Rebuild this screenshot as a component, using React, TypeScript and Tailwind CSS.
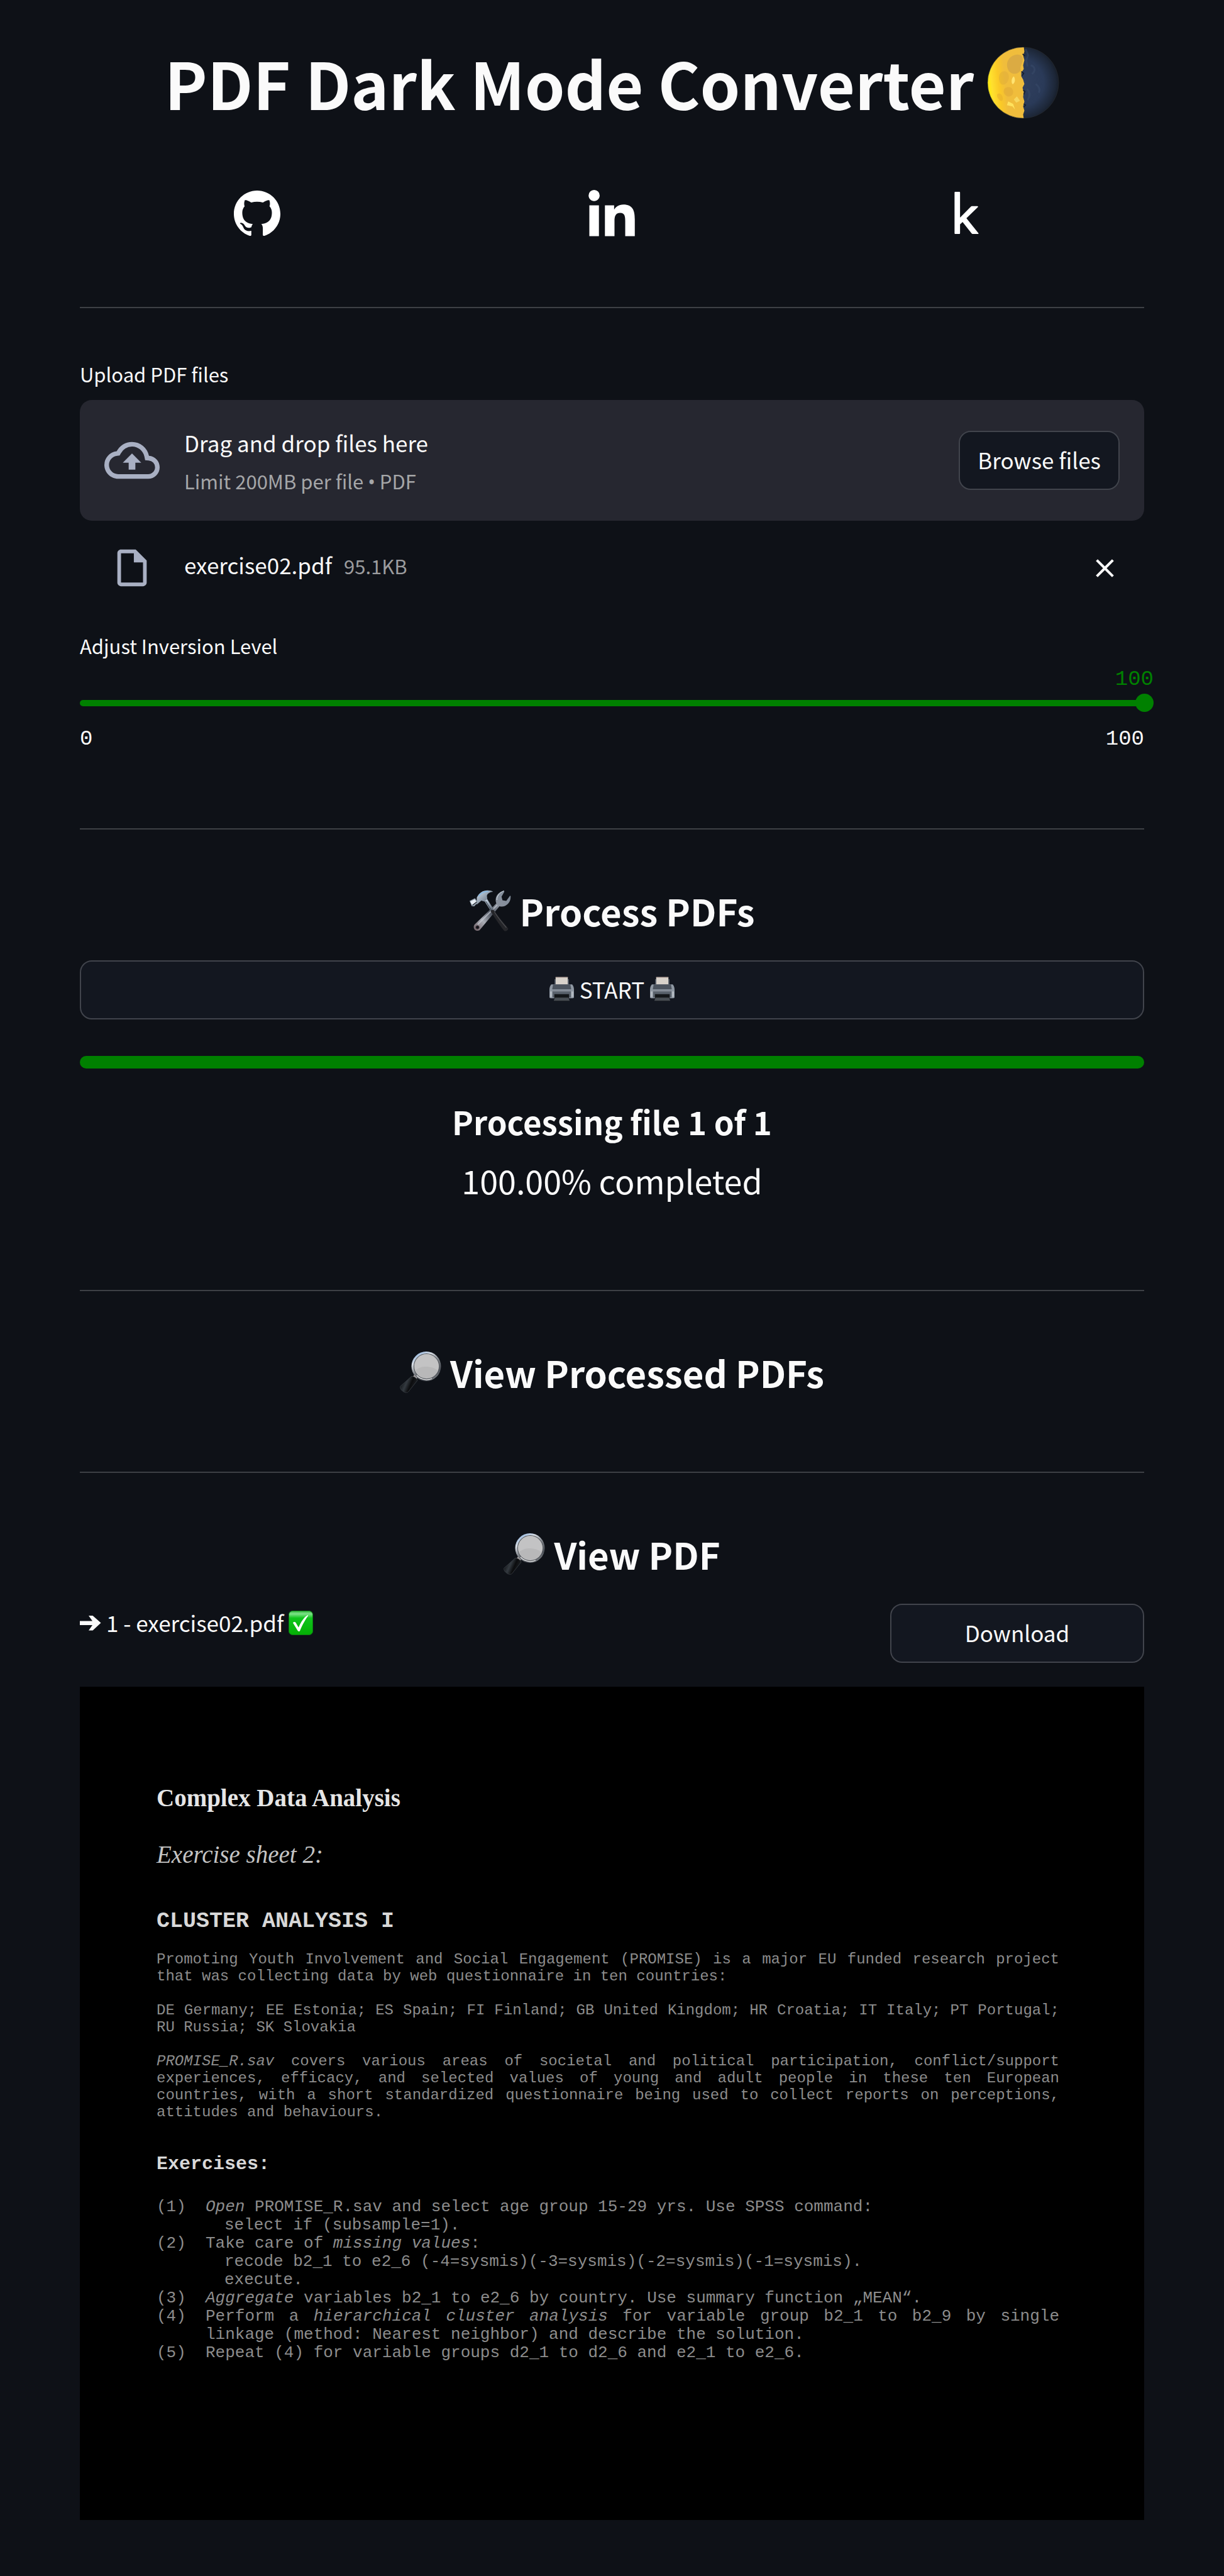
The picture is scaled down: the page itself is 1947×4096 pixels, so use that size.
import { useState } from "react";
import type { ReactNode } from "react";
import { SiGithub } from "react-icons/si";
import { FaLinkedinIn } from "react-icons/fa";
import { MdClear, MdOutlineCloudUpload, MdOutlineInsertDriveFile } from "react-icons/md";

function MoonIcon() {
  return (
    <svg viewBox="0 0 116 116" className="size-[115px] shrink-0" role="img" aria-label="First quarter moon">
      <defs>
        <linearGradient id="moonLit" x1="0" x2="1" y1="0.6" y2="0.4">
          <stop offset="0" stopColor="#fff200" />
          <stop offset="0.14" stopColor="#ffe02e" />
          <stop offset="0.32" stopColor="#fbc926" />
          <stop offset="0.5" stopColor="#f0bd3c" />
        </linearGradient>
        <radialGradient id="moonDark" cx="0.45" cy="0.5" r="0.56">
          <stop offset="0" stopColor="#31405f" />
          <stop offset="0.6" stopColor="#2a3a58" />
          <stop offset="0.88" stopColor="#1d2738" />
          <stop offset="1" stopColor="#141a24" />
        </radialGradient>
        <clipPath id="moonDisc">
          <circle cx="58" cy="58" r="57" />
        </clipPath>
      </defs>
      <g clipPath="url(#moonDisc)">
        <rect width="116" height="116" fill="url(#moonDark)" />
        <path d="M0 0H59L60 8L58 14L60 22L58 30L59 36L55 42L55 48L58 53L60 60L57 66L59 73L58 81L60 88L58 96L60 103L58 109L59 116H0Z" fill="url(#moonLit)" />
        <path d="M38 17c8-6 17-5 19 1 2 8-5 13-3 20-5 8-14 7-19 1-5-8-3-17 3-22Z" fill="#c69a49" opacity="0.5" />
        <path d="M22 42c6-5 12-2 13 5s-4 15-10 14-8-14-3-19Z" fill="#d9a83a" opacity="0.4" />
        <path d="M30 66c7-3 12 1 12 7s-6 9-11 6-6-10-1-13Z" fill="#d39c33" opacity="0.35" />
        <path d="M17 76c4-2 7 1 8 5s0 7-3 6-8-8-5-11Z" fill="#e3ac2e" opacity="0.5" />
        <path d="M43 48c3 4 2 10-1 12s-4-9 1-12Z" fill="#ffe371" />
        <path d="M34 88l8 4 3 9-4-5-9-2Z" fill="#ffe25d" />
        <path d="M48 80l5 7-6 3-4-5Z" fill="#f9dd68" opacity="0.8" />
        <path d="M62 4l4 10-3 8 2 10M70 30c8 2 8 10 2 14M64 68c6 6 5 12 1 18M78 60c5 3 8 9 5 14" fill="none" stroke="#3c4d6d" strokeWidth="3" opacity="0.45" />
        <path d="M57 12l4 3M55 40l4 3-3 4M58 70l3 2-2 5M59 92l3 2-3 3" fill="none" stroke="#151d2c" strokeWidth="1.5" />
      </g>
      <circle cx="58" cy="58" r="57" fill="none" stroke="#2b2f33" strokeWidth="0.8" opacity="0.7" />
    </svg>
  );
}

function KaggleIcon() {
  return (
    <svg viewBox="0 0 24 24" className="block size-[67px]" fill="currentColor" aria-hidden="true">
      <path d="M18.825 23.859c-.022.092-.117.141-.281.141h-3.139c-.187 0-.351-.082-.492-.248l-5.178-6.589-1.448 1.374v5.111c0 .235-.117.352-.351.352H5.505c-.236 0-.354-.117-.354-.352V.353c0-.233.118-.353.354-.353h2.431c.234 0 .351.12.351.353v14.343l6.203-6.272c.165-.165.33-.246.495-.246h3.239c.144 0 .236.06.285.18.046.149.034.255-.036.315l-6.555 6.344 6.836 8.507c.095.104.117.208.07.358" />
    </svg>
  );
}

function ToolsIcon() {
  return (
    <svg viewBox="0 0 66 66" className="size-[66px] shrink-0" role="img" aria-label="Hammer and wrench">
      <defs>
        <linearGradient id="toolSteel" x1="0" x2="1" y1="0" y2="1">
          <stop offset="0" stopColor="#d7e6f2" />
          <stop offset="0.5" stopColor="#8f9cab" />
          <stop offset="1" stopColor="#555c68" />
        </linearGradient>
        <linearGradient id="wrenchSteel" x1="1" x2="0" y1="0" y2="1">
          <stop offset="0" stopColor="#7f8c9a" />
          <stop offset="0.35" stopColor="#8a919d" />
          <stop offset="0.55" stopColor="#4e545f" />
          <stop offset="0.75" stopColor="#a9adb5" />
          <stop offset="1" stopColor="#6a5a60" />
        </linearGradient>
      </defs>
      <path d="M54.500 1.500C47 3 41 9 41.500 17c.1 2 .6 3.300 1 4.500L8.200 54.800c-3.500 3.700-1 10.200 4.300 10.200 2.200 0 3.600-1 4.700-2.500L47.500 26c8 2.500 18-3.500 17.800-15.500l-.8-1.500-6.200 8.600-6-1-1.500-5.800 4.500-8Z" fill="url(#wrenchSteel)" />
      <path d="M54.500 1.500C48 4 43.500 9 43.300 16" fill="none" stroke="#d4dbe2" strokeWidth="1" />
      <path d="M44 24L13 55" fill="none" stroke="#c4c9d1" strokeWidth="2" opacity="0.7" />
      <circle cx="12.500" cy="59.500" r="2.700" fill="#0e1117" stroke="#4c3a40" strokeWidth="1" />
      <path d="M23.500 17.500l4.200-3.200 10.500 16.500-4.200 3.400Z" fill="url(#toolSteel)" />
      <path d="M25.500 18l9.500 15" stroke="#3b414b" strokeWidth="1.200" />
      <path d="M33.200 33.500c2-1.800 4.200-2.500 5.500-1 6 9 15.500 20 22.500 28.500 1 2.600-3 5.600-6 4.300C48 56 39.500 44 33.200 33.500Z" fill="#25262a" />
      <path d="M39.500 35c5 8 12 17 19 25" fill="none" stroke="#4b4c50" strokeWidth="1.400" />
      <path d="M11.500 12C15 5 21 .5 28.500.7c4 .1 7.500.8 8.700 2.300-5 .4-8.700 2.500-9.700 6.500l.7 5-5 4-4.500-1.500-7.500 6.500Z" fill="url(#toolSteel)" />
      <path d="M14 10C18 4.500 23 2 30 2.500" fill="none" stroke="#83b8e6" strokeWidth="1.500" />
      <path d="M0 17.500l8.500-4.300 4.500 6.800-5.800 6.300-3.800-.6Z" fill="#9aa7b5" />
      <path d="M1 18.500l7-3.500 3 3.800-7 5.200Z" fill="#e7eef4" />
      <path d="M4.500 24.500l7-5.500" stroke="#2c3038" strokeWidth="1.500" />
    </svg>
  );
}

function MagnifierIcon() {
  return (
    <svg viewBox="0 0 66 66" className="size-[66px] shrink-0" role="img" aria-label="Magnifying glass">
      <defs>
        <linearGradient id="lensRim" x1="0.2" x2="0.8" y1="0" y2="1">
          <stop offset="0" stopColor="#8fb5e2" />
          <stop offset="0.25" stopColor="#d6dbe2" />
          <stop offset="0.55" stopColor="#73777d" />
          <stop offset="0.8" stopColor="#4d5259" />
          <stop offset="1" stopColor="#8c8f93" />
        </linearGradient>
        <linearGradient id="lensHandle" x1="0" x2="1" y1="0.3" y2="0.7">
          <stop offset="0" stopColor="#0a0c0f" />
          <stop offset="0.35" stopColor="#343a40" />
          <stop offset="0.6" stopColor="#0b0c0e" />
          <stop offset="1" stopColor="#26292d" />
        </linearGradient>
      </defs>
      <path d="M20.500 40.500l3.500-5 5 4.500-3.500 5Z" fill="#a9a4a4" />
      <path d="M18.500 39.500c3.500-.5 9 3 9.500 6.500L13.500 64c-1.500 1.800-4.500 1.800-7.500 0C2 61.500.2 58.500.6 55.500Z" fill="url(#lensHandle)" stroke="#3a3f45" strokeWidth="0.800" />
      <circle cx="42" cy="23.500" r="23.500" fill="url(#lensRim)" />
      <circle cx="42.500" cy="23.500" r="20.600" fill="#55595e" />
      <circle cx="42.500" cy="23.500" r="19.600" fill="#c3c3c4" />
      <path d="M25 30a18.500 18.500 0 0 0 35 0c-8-7-26-9-35 0Z" fill="#b4b4b5" opacity="0.7" />
      <path d="M27 38a21 21 0 0 0 24 5" fill="none" stroke="#e9e9ea" strokeWidth="1.200" />
    </svg>
  );
}

function PrinterIcon() {
  return (
    <svg viewBox="0 0 40 40" className="size-[39px] shrink-0" aria-hidden="true">
      <path d="M10 1h20v12H10Z" fill="#d8d2cb" />
      <path d="M10 .3h20v1.200H10Z" fill="#a08d86" />
      <path d="M8.500 4h1.500v9H8.500zM30 4h1.500v9H30z" fill="#68707b" />
      <path d="M3 12.500h34c2 2 3 5 3 9V33c0 1.500-1 2-2 2H2c-1 0-2-.5-2-2V21.500c0-4 1-7 3-9Z" fill="#8f98a3" />
      <path d="M6 12.500h28l1.500 8H4.500Z" fill="#4c545f" />
      <path d="M5 21h30v2.500H5Z" fill="#838b96" />
      <path d="M5 24h30v10H5Z" fill="#59616b" />
      <path d="M1 24h3v9H1zM36 24h3v9h-3z" fill="#b3bac2" />
      <path d="M8 28.500h24V39c0 .6-.4 1-1 1H9c-.6 0-1-.4-1-1Z" fill="#14171a" />
      <path d="M9 34h22l2 5.300H7Z" fill="#484e54" />
    </svg>
  );
}

function CheckIcon() {
  return (
    <svg viewBox="0 0 40 40" className="size-[39px] shrink-0" role="img" aria-label="Done">
      <defs>
        <linearGradient id="checkFill" x1="0" x2="0" y1="0" y2="1">
          <stop offset="0" stopColor="#2fb53a" />
          <stop offset="0.12" stopColor="#7fe28a" />
          <stop offset="0.3" stopColor="#0fc41c" />
          <stop offset="1" stopColor="#04b004" />
        </linearGradient>
      </defs>
      <rect x="0.500" y="0.500" width="39" height="39" rx="6" fill="url(#checkFill)" stroke="#0c7a14" strokeWidth="1" />
      <path d="M8 19c2-1 3-.5 4 1l4.300 7.500C20 19 25 11 31 7.500c.8-.3 1.200.2.8 1C27 15 22 24.500 18.500 33c-.6 1.200-2.600 1.300-3.300.2L7.500 20.500c-.4-.8-.2-1.300.5-1.500Z" fill="#fff" />
    </svg>
  );
}

function ArrowIcon() {
  return (
    <svg viewBox="0 0 34 25" className="h-[25px] w-[34px] shrink-0" aria-hidden="true">
      <path d="M0 9.500H20L14 1h6.500L33.500 12.500 20.500 24.500H14l6-8.500H0Z" fill="#fafafa" />
    </svg>
  );
}

function SectionTitle({ icon, children }: { icon: ReactNode; children: ReactNode }) {
  return (
    <h3 className="mt-[87px] flex items-center justify-center gap-[14px] text-[58px] leading-[84px] font-bold">
      {icon}
      <span>{children}</span>
    </h3>
  );
}

function Divider({ className }: { className: string }) {
  return <hr className={`h-[2px] border-0 bg-[#3d4045] ${className}`} />;
}

const buttonLook = "h-[94px] rounded-[19px] border-2 border-[#41444c] bg-[#131720] pb-[3px] text-[35px] leading-[56px]";

function Exercise({ n, children }: { n: number; children: ReactNode }) {
  return (
    <li className="flex">
      <span className="w-[78px] shrink-0">({n})</span>
      <div className="min-w-0 flex-1">{children}</div>
    </li>
  );
}

function PdfPage() {
  return (
    <article className="mt-[36px] bg-black pt-[154px] pr-[135px] pb-[251px] pl-[122px] font-['Liberation_Mono',monospace] text-[#8c8c8c]">
      <h4 className="font-['Liberation_Serif',serif] text-[39px] leading-[45px] font-bold text-[#e6e6e6]">Complex Data Analysis</h4>
      <p className="mt-[45px] font-['Liberation_Serif',serif] text-[39px] leading-[45px] text-[#c4c4c4] italic">Exercise sheet 2:</p>
      <h5 className="mt-[64px] text-[35px] leading-[40px] font-bold text-[#d8d8d8]">CLUSTER ANALYSIS I</h5>
      <div className="mt-[27px] flex flex-col gap-[27px] text-justify text-[24px] leading-[27px]">
        <p>
          Promoting Youth Involvement and Social Engagement (PROMISE) is a major EU funded research project that was
          collecting data by web questionnaire in ten countries:
        </p>
        <p>
          DE Germany; EE Estonia; ES Spain; FI Finland; GB United Kingdom; HR Croatia; IT Italy; PT Portugal; RU Russia;
          SK Slovakia
        </p>
        <p>
          <i>PROMISE_R.sav</i> covers various areas of societal and political participation, conflict/support
          experiences, efficacy, and selected values of young and adult people in these ten European countries, with a
          short standardized questionnaire being used to collect reports on perceptions, attitudes and behaviours.
        </p>
      </div>
      <h5 className="mt-[51px] text-[30px] leading-[36px] font-bold text-[#d8d8d8]">Exercises:</h5>
      <ol className="mt-[36px] text-[26px] leading-[29px]">
        <Exercise n={1}>
          <p><i>Open</i> PROMISE_R.sav and select age group 15-29 yrs. Use SPSS command:</p>
          <p className="pl-[30px]">select if (subsample=1).</p>
        </Exercise>
        <Exercise n={2}>
          <p>Take care of <i>missing values</i>:</p>
          <p className="pl-[30px]">recode b2_1 to e2_6 (-4=sysmis)(-3=sysmis)(-2=sysmis)(-1=sysmis).</p>
          <p className="pl-[30px]">execute.</p>
        </Exercise>
        <Exercise n={3}>
          <p><i>Aggregate</i> variables b2_1 to e2_6 by country. Use summary function „MEAN“.</p>
        </Exercise>
        <Exercise n={4}>
          <p className="text-justify">
            Perform a <i>hierarchical cluster analysis</i> for variable group b2_1 to b2_9 by single linkage (method:
            Nearest neighbor) and describe the solution.
          </p>
        </Exercise>
        <Exercise n={5}>
          <p>Repeat (4) for variable groups d2_1 to d2_6 and e2_1 to e2_6.</p>
        </Exercise>
      </ol>
    </article>
  );
}

export default function App() {
  const [level, setLevel] = useState(100);

  return (
    <main className="min-h-screen bg-[#0e1117] px-[127px] pt-[59px] pb-[89px] font-['Noto_Sans_CJK_SC',sans-serif] text-[#fafafa]">
      <h1 className="flex items-center justify-center gap-[21px] text-[102px] leading-[144px] font-bold">
        <span>PDF Dark Mode Converter</span>
        <MoonIcon />
      </h1>

      <nav className="mt-[99px] grid h-[73px] grid-cols-3 items-start justify-items-center text-white">
        <a href="#github" aria-label="GitHub" className="block"><SiGithub className="block size-[74px]" /></a>
        <a href="#linkedin" aria-label="LinkedIn" className="block"><FaLinkedinIn className="block size-[84px]" /></a>
        <a href="#kaggle" aria-label="Kaggle" className="block pt-[3px]"><KaggleIcon /></a>
      </nav>

      <Divider className="mt-[113px]" />

      <label htmlFor="browse" className="mt-[87px] block text-[31px] leading-[36px]">Upload PDF files</label>
      <section className="mt-[23px] flex h-[192px] items-center gap-[39px] rounded-[19px] bg-[#262730] px-[39px]">
        <MdOutlineCloudUpload className="size-[88px] shrink-0 text-[#a9b0c3]" />
        <div className="flex flex-1 flex-col gap-[9px]">
          <span className="text-[35px] leading-[56px]">Drag and drop files here</span>
          <span className="text-[31px] leading-[48px] text-[#a5a6a8]">
            Limit 200MB per file <span className="font-['Noto_Sans',sans-serif] leading-none">•</span> PDF
          </span>
        </div>
        <button id="browse" type="button" className={`px-[28px] ${buttonLook}`}>Browse files</button>
      </section>
      <div className="mt-[27px] flex h-[96px] items-center pr-[38px] pl-[48px]">
        <MdOutlineInsertDriveFile className="size-[70px] shrink-0 text-[#a9b0c3]" />
        <div className="mb-2 ml-[48px] flex flex-1 items-baseline gap-[19px]">
          <span className="text-[35px] leading-[56px]">exercise02.pdf</span>
          <small className="text-[31px] leading-[56px] text-[#9b9c9e]">95.1KB</small>
        </div>
        <button type="button" aria-label="Remove file"><MdClear className="size-[49px]" /></button>
      </div>

      <label htmlFor="level" className="mt-[58px] block text-[31px] leading-[36px]">Adjust Inversion Level</label>
      <output htmlFor="level" className="mt-[17px] -mr-[15px] block text-right font-['Liberation_Mono',monospace] text-[34px] leading-[36px] text-[#008000]">{level}</output>
      <div className="mt-[5px] grid h-[29px] items-center">
        <div className="col-start-1 row-start-1 h-[10px] overflow-hidden rounded-[5px] bg-[#3d4045]">
          <div className="h-full bg-[#008000]" style={{ width: `${level}%` }} />
        </div>
        <input
          id="level"
          type="range"
          min={0}
          max={100}
          value={level}
          onChange={(e) => setLevel(Number(e.target.value))}
          className="col-start-1 row-start-1 -mx-[15px] h-[29px] w-[calc(100%+30px)] appearance-none bg-transparent [&::-webkit-slider-thumb]:size-[29px] [&::-webkit-slider-thumb]:appearance-none [&::-webkit-slider-thumb]:rounded-full [&::-webkit-slider-thumb]:bg-[#008000]"
        />
      </div>
      <div className="mt-[25px] flex justify-between font-['Liberation_Mono',monospace] text-[34px] leading-[36px]">
        <span>0</span>
        <span>100</span>
      </div>

      <Divider className="mt-[124px]" />

      <SectionTitle icon={<ToolsIcon />}>Process PDFs</SectionTitle>
      <button type="button" className={`mt-[37px] flex w-full items-center justify-center gap-[9px] ${buttonLook}`}>
        <PrinterIcon />
        <span>START</span>
        <PrinterIcon />
      </button>
      <div role="progressbar" aria-label="Progress" aria-valuenow={100} className="mt-[58px] h-[20px] rounded-[10px] bg-[#008000]" />
      <div className="mt-[38px] text-center leading-[93px]">
        <p className="text-[51px] font-bold">Processing file 1 of 1</p>
        <p className="text-[52px]">100.00% completed</p>
      </div>

      <Divider className="mt-[128px]" />
      <SectionTitle icon={<MagnifierIcon />}>View Processed PDFs</SectionTitle>

      <Divider className="mt-[116px]" />
      <SectionTitle icon={<MagnifierIcon />}>View PDF</SectionTitle>

      <div className="mt-[37px] flex items-start justify-between pb-[2px]">
        <p className="flex items-center gap-[8px] pt-[2px] text-[35px] leading-[56px]">
          <ArrowIcon />
          <span>1 - exercise02.pdf</span>
          <CheckIcon />
        </p>
        <button type="button" className={`w-[404px] ${buttonLook}`}>Download</button>
      </div>

      <PdfPage />
    </main>
  );
}
